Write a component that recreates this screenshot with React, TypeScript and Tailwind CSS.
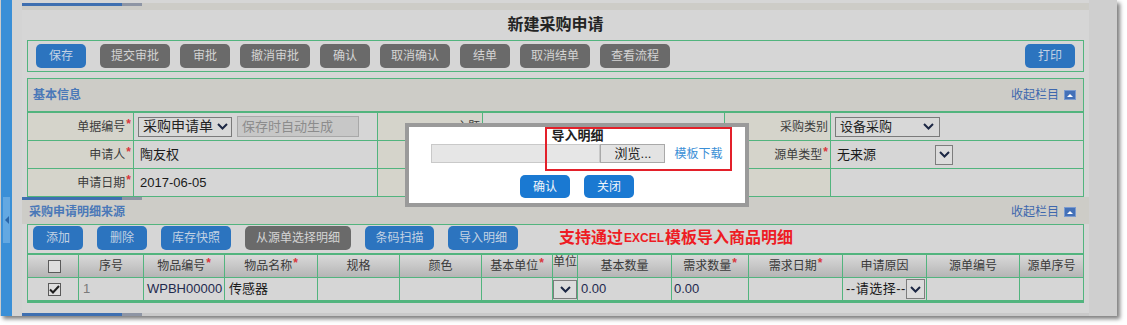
import React from 'react'

// dimmed page behind the "导入明细" dialog

function Chevron() {
  return (
    <svg width="11" height="7" viewBox="0 0 11 7" className="shrink-0">
      <path d="M1 1 L5.5 5.5 L10 1" fill="none" stroke="#1c2744" strokeWidth="2" />
    </svg>
  )
}

function DropBox({ cls }: { cls: string }) {
  return (
    <div className={`${cls} border border-[#7d7d7d] bg-[#dcdcdc] flex items-center justify-center shrink-0`}>
      <Chevron />
    </div>
  )
}

function Star() {
  return <span className="text-[#d9363c] text-[12px] font-bold relative -top-[3px] ml-px">*</span>
}

function Btn({ label, w, blue }: { label: string, w: string, blue?: boolean }) {
  return (
    <div
      className={`${w} h-[24px] rounded-[5px] flex items-center justify-center text-[12px] shrink-0 ${
        blue ? 'bg-[#2c74bf] text-[#c3d2e3]' : 'bg-[#6a6a6a] text-[#d4d4d4]'
      }`}
    >
      {label}
    </div>
  )
}

function Collapse() {
  return (
    <div className="flex items-center text-[12px] text-[#3d67ad]">
      收起栏目
      <div className="ml-[5px] w-[12px] h-[10px] bg-[#4471b8] border border-[#7b9bcf] flex items-center justify-center">
        <svg width="6" height="3" viewBox="0 0 6 3"><path d="M0 3 L3 0 L6 3Z" fill="#ffffff" /></svg>
      </div>
    </div>
  )
}

function Bar() {
  return (
    <div className="flex h-[3px]">
      <div className="w-[100px] bg-[#3f6fb0]" />
      <div className="w-[20px] bg-[#8e95a4]" />
    </div>
  )
}

function Label({ text, star }: { text: string, star?: boolean }) {
  return (
    <div className="bg-[#d5d4cb] flex items-center justify-end pr-[2px] text-[12px] text-[#3c3c3c]">
      {text}
      {star && <Star />}
    </div>
  )
}

function Cell({ children, cls = '' }: { children?: React.ReactNode, cls?: string }) {
  return <div className={`bg-[#d6d6d6] flex items-center text-[13px] text-[#1a1a1a] overflow-hidden whitespace-nowrap ${cls}`}>{children}</div>
}

function Head({ text, star, top }: { text: string, star?: boolean, top?: boolean }) {
  return (
    <div
      className={`bg-linear-to-b from-[#d9d9d9] to-[#b5b5b5] flex justify-center text-[12px] text-[#3a3a3a] whitespace-nowrap overflow-hidden ${
        top ? 'items-start leading-[14px]' : 'items-center'
      }`}
    >
      {text}
      {star && <Star />}
    </div>
  )
}

function Check({ checked }: { checked?: boolean }) {
  return (
    <div className="w-[13px] h-[13px] border border-[#5a5a5a] bg-[#dedede] flex items-center justify-center">
      {checked && (
        <svg width="11" height="9" viewBox="0 0 11 9"><path d="M1 4.5 L4 7.5 L10 1" fill="none" stroke="#1e1e1e" strokeWidth="2" /></svg>
      )}
    </div>
  )
}

function Modal() {
  return (
    <div className="absolute left-[405px] top-[123px] w-[344px] h-[84px] border-4 border-[#9a9a9a] bg-white flex flex-col items-center">
      <div className="absolute left-[136px] top-0 w-[187px] h-[44px] border-2 border-[#e3202a]" />
      <div className="h-[17px] leading-[17px] text-[13px] font-bold text-[#222] pl-[1px]">导入明细</div>
      <div className="flex items-center h-[19px]">
        <div className="w-[169px] h-[19px] bg-[#e6e6e6] border border-[#c9c9c9]" />
        <div className="w-[65px] h-[19px] bg-[#e3e3e3] border border-[#a9a9a9] flex items-center justify-center text-[13px] text-[#222]">浏览...</div>
        <div className="ml-[9px] text-[12px] text-[#3b8fd6]">模板下载</div>
      </div>
      <div className="mt-[12px] flex gap-[14px]">
        <div className="w-[50px] h-[23px] rounded-[5px] bg-[#1a79d2] text-[#f0f5fb] text-[12px] flex items-center justify-center">确认</div>
        <div className="w-[50px] h-[23px] rounded-[5px] bg-[#1a79d2] text-[#f0f5fb] text-[12px] flex items-center justify-center">关闭</div>
      </div>
    </div>
  )
}

export default function App() {
  return (
    <div className="relative w-[1127px] h-[325px] bg-white overflow-hidden font-['Liberation_Sans','Noto_Sans_CJK_SC',sans-serif]">
      <div className="flex w-[1117px] h-[316px] shadow-[3px_3px_4px_rgba(0,0,0,0.5)]">
        {/* left rail */}
        <div className="flex w-[22px] shrink-0">
          <div className="w-px bg-[#cbcbcb]" />
          <div className="w-[11px] bg-[#3a8fd7] flex flex-col">
            <div className="h-[197px]" />
            <div className="h-[46px] mx-[2px] bg-[#63a8e2] flex items-center justify-center">
              <svg width="4" height="8" viewBox="0 0 4 8"><path d="M4 0 L0 4 L4 8Z" fill="#2a66aa" /></svg>
            </div>
          </div>
          <div className="w-[10px] bg-[#d4d4d4]" />
        </div>

        <div className="w-[1067px] shrink-0 flex flex-col bg-[#d6d6d6]">
          <div className="h-[3px] bg-[#d6d6d6]" />
          <div className="h-[7px] bg-[#cdccc7]">
            <Bar />
          </div>
          <div className="h-[30px] flex items-center justify-center text-[16px] font-bold text-[#242424]">新建采购申请</div>

          {/* toolbar */}
          <div className="mx-[5px] h-[32px] border border-[#52b47e] flex items-center px-[8px]">
            <Btn label="保存" w="w-[50px]" blue />
            <div className="ml-[14px] flex gap-[10px]">
              <Btn label="提交审批" w="w-[70px]" />
              <Btn label="审批" w="w-[50px]" />
              <Btn label="撤消审批" w="w-[70px]" />
              <Btn label="确认" w="w-[50px]" />
              <Btn label="取消确认" w="w-[70px]" />
              <Btn label="结单" w="w-[50px]" />
              <Btn label="取消结单" w="w-[70px]" />
              <Btn label="查看流程" w="w-[70px]" />
            </div>
            <div className="ml-auto">
              <Btn label="打印" w="w-[50px]" blue />
            </div>
          </div>

          {/* 基本信息 */}
          <div className="mx-[5px] mt-[6px] border border-[#52b47e]">
            <div className="h-[32px] bg-[#cdccc7] flex items-center justify-between pl-[5px] pr-[7px]">
              <div className="text-[12px] font-bold text-[#4a78b8]">基本信息</div>
              <Collapse />
            </div>
            <div className="grid grid-cols-[105px_243px_104px_241px_105px_1fr] grid-rows-[27px_27px_27px] gap-px bg-[#52b47e] border-t-2 border-[#52b47e]">
              <Label text="单据编号" star />
              <Cell cls="pl-[4px] gap-[5px]">
                <div className="w-[94px] h-[20px] border border-[#7a7a7a] bg-[#d8d8d8] flex items-center justify-between pr-[3px]">
                  <span className="text-[14px] pl-[4px] text-[#222]">采购申请单</span>
                  <Chevron />
                </div>
                <div className="w-[122px] h-[21px] border border-[#a8a8a8] bg-[#c7c7c7] text-[#8c8c8c] text-[13px] flex items-center pl-[4px]">保存时自动生成</div>
              </Cell>
              <Label text="主题" />
              <Cell />
              <Label text="采购类别" />
              <Cell cls="pl-[4px]">
                <div className="w-[105px] h-[20px] border border-[#7a7a7a] bg-[#d8d8d8] flex items-center justify-between pl-[4px] pr-[5px] text-[#222]">
                  设备采购
                  <Chevron />
                </div>
              </Cell>

              <Label text="申请人" star />
              <Cell cls="pl-[6px]">陶友权</Cell>
              <Label text="" />
              <Cell />
              <Label text="源单类型" star />
              <Cell cls="pl-[6px]">
                <span className="w-[98px]">无来源</span>
                <DropBox cls="w-[18px] h-[20px]" />
              </Cell>

              <Label text="申请日期" star />
              <Cell cls="pl-[6px]">2017-06-05</Cell>
              <Label text="" />
              <Cell />
              <Label text="" />
              <Cell />
            </div>
          </div>

          {/* 采购申请明细来源 */}
          <div className="h-[27px] bg-[#cdccc7] flex flex-col">
            <Bar />
            <div className="flex-1 flex items-center justify-between pl-[7px] pr-[13px]">
              <div className="text-[12px] font-bold text-[#4a78b8]">采购申请明细来源</div>
              <Collapse />
            </div>
          </div>

          <div className="mx-[5px] border border-[#52b47e]">
            <div className="h-[28px] flex items-start pt-[1px] pl-[5px] gap-[14px]">
              <Btn label="添加" w="w-[50px]" blue />
              <Btn label="删除" w="w-[50px]" blue />
              <Btn label="库存快照" w="w-[70px]" blue />
              <Btn label="从源单选择明细" w="w-[106px]" />
              <Btn label="条码扫描" w="w-[69px]" blue />
              <Btn label="导入明细" w="w-[70px]" blue />
              <div className="ml-[27px] h-[24px] flex items-center text-[16px] font-bold text-[#ee1c24]">
                支持通过<span className="text-[12px] mx-px">EXCEL</span>模板导入商品明细
              </div>
            </div>
            <div className="grid grid-cols-[50px_64px_80px_92px_81px_81px_70px_24px_93px_76px_93px_83px_92px_1fr] grid-rows-[22px_22px] gap-px bg-[#52b47e] border-y-2 border-[#52b47e]">
              <div className="bg-linear-to-b from-[#d9d9d9] to-[#b5b5b5] flex items-center justify-center pl-[3px]">
                <Check />
              </div>
              <Head text="序号" />
              <Head text="物品编号" star />
              <Head text="物品名称" star />
              <Head text="规格" />
              <Head text="颜色" />
              <Head text="基本单位 " star />
              <Head text="单位" top />
              <Head text="基本数量" />
              <Head text="需求数量 " star />
              <Head text="需求日期" star />
              <Head text="申请原因" />
              <Head text="源单编号" />
              <Head text="源单序号" />

              <Cell cls="justify-center pl-[3px]"><Check checked /></Cell>
              <Cell cls="pl-[4px] text-[#7a7a7a]">1</Cell>
              <Cell cls="pl-[3px] text-[#1f2a4e]">WPBH00000</Cell>
              <Cell cls="pl-[4px]">传感器</Cell>
              <Cell />
              <Cell />
              <Cell />
              <Cell cls="justify-center"><DropBox cls="w-[24px] h-[19px]" /></Cell>
              <Cell cls="pl-[3px] text-[#1f2a4e]">0.00</Cell>
              <Cell cls="pl-[2px] text-[#1f2a4e]">0.00</Cell>
              <Cell />
              <Cell cls="pl-[3px] gap-[2px]">
                <span className="w-[58px] tracking-[0.5px]">--请选择--</span>
                <DropBox cls="w-[19px] h-[20px]" />
              </Cell>
              <Cell />
              <Cell />
            </div>
          </div>

          <div className="h-[10px]" />
          <div className="flex h-[3px] bg-[#c9c9c9]">
            <div className="w-[100px] bg-[#3f6fb0]" />
            <div className="w-[20px] bg-[#8e95a4]" />
          </div>
        </div>

        <div className="flex-1 bg-[#cfcfcf]" />
      </div>
      <Modal />
    </div>
  )
}
